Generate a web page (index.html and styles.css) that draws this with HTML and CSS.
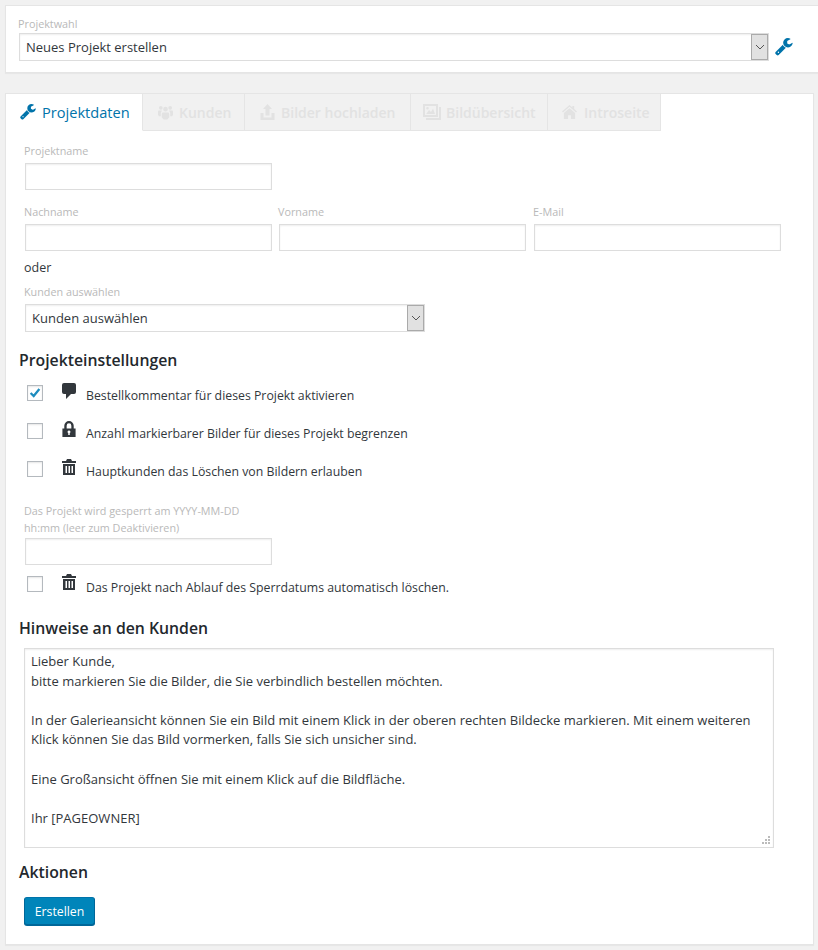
FILE: index.html
```
<!DOCTYPE html>
<html lang="de">
<head>
<meta charset="utf-8">
<title>Projektwahl</title>
<link rel="stylesheet" href="styles.css">
</head>
<body>
<svg class="defs" width="0" height="0">
  <symbol id="i-wrench" viewBox="0 0 1792 1792"><path d="M384 1344q0-26-19-45t-45-19-45 19-19 45 19 45 45 19 45-19 19-45zm644-420l-682 682q-37 37-90 37-52 0-91-37l-106-108q-38-36-38-90 0-53 38-91l681-681q39 98 114.5 173.5t173.5 114.5zm634-435q0 39-23 106-47 134-164.5 217.5t-258.5 83.5q-185 0-316.5-131.5t-131.500-316.500 131.500-316.500 316.500-131.500q58 0 121.500 16.500t107.500 46.500q16 11 16 28t-16 28l-293 169v224l193 107q5-3 79-48.500t135.500-81 70.500-35.500q15 0 23.500 10t8.500 25z"/></symbol>
  <symbol id="i-trash" viewBox="0 0 14 16"><path d="M5 0h4l1 2h4v2H0V2h4zM1 5h12v11H1zm2.500 2v7h1.500V7zm3 0v7h1.500V7zm3 0v7H11V7z" fill-rule="evenodd"/></symbol>
  <symbol id="i-lock" viewBox="0 0 14 17"><path d="M7 0a5 5 0 0 1 5 5v3h2v9H0V8h2V5a5 5 0 0 1 5-5zm0 2.500A2.500 2.500 0 0 0 4.500 5v3h5V5A2.500 2.500 0 0 0 7 2.500zM7 10a1.500 1.500 0 0 0-.8 2.800V15h1.600v-2.200A1.500 1.500 0 0 0 7 10z" fill-rule="evenodd"/></symbol>
  <symbol id="i-comment" viewBox="0 0 14 16"><path d="M2 0h10a2 2 0 0 1 2 2v7a2 2 0 0 1-2 2H9l-5 5v-5H2a2 2 0 0 1-2-2V2a2 2 0 0 1 2-2z"/></symbol>
  <symbol id="i-users" viewBox="0 0 16 16"><path d="M8 2.500a2.500 2.500 0 1 1 0 5 2.500 2.500 0 0 1 0-5zM3 1.500a2 2 0 1 1 0 4 2 2 0 0 1 0-4zm10 0a2 2 0 1 1 0 4 2 2 0 0 1 0-4zM5.500 8.500h5a1.500 1.500 0 0 1 1.500 1.500v3.500L10 16H6l-2-2.500V10a1.500 1.500 0 0 1 1.500-1.500zM1 6.500h3.200L3 9v3.500H1l-1-1.500V7.500a1 1 0 0 1 1-1zm10.800 0H15a1 1 0 0 1 1 1V11l-1 1.500h-2V9z"/></symbol>
  <symbol id="i-upload" viewBox="0 0 14 16"><path d="M7 0l4.500 5H9v6.500H5V5H2.500zM0 9h3v4.500h8V9h3v7H0z"/></symbol>
  <symbol id="i-images" viewBox="0 0 18 16"><path d="M0 0h15v13H0zm2 2v9h11V2zm1.200 8L6 6l2 2 2-3.500L12 10zM4.500 3a1.300 1.300 0 1 1 0 2.600 1.300 1.300 0 0 1 0-2.600zM16 3h2v13H3v-2h13z" fill-rule="evenodd"/></symbol>
  <symbol id="i-home" viewBox="0 0 16 15"><path d="M8 0l3 2.600V1h2v3.400L16 7l-1 1-7-6-7 6-1-1zM8 3.500l6 5V15H9.500v-4h-3v4H2V8.500z"/></symbol>
</svg>

<section class="panel panel-top">
  <label class="field-label">Projektwahl</label>
  <div class="project-row">
    <div class="select select-wide">
      <span class="select-value">Neues Projekt erstellen</span>
      <span class="select-arrow"><svg viewBox="0 0 10 6" width="10" height="6"><path d="M1 1l4 4 4-4" fill="none" stroke="#555" stroke-width="1"/></svg></span>
    </div>
    <svg class="icon-wrench-blue"><use href="#i-wrench"/></svg>
  </div>
</section>

<section class="panel panel-main">
  <nav class="tabs">
    <a class="tab tab-active tab-1"><svg class="tab-icon"><use href="#i-wrench"/></svg>Projektdaten</a>
    <a class="tab tab-2"><svg class="tab-icon"><use href="#i-users"/></svg>Kunden</a>
    <a class="tab tab-3"><svg class="tab-icon"><use href="#i-upload"/></svg>Bilder hochladen</a>
    <a class="tab tab-4"><svg class="tab-icon"><use href="#i-images"/></svg>Bildübersicht</a>
    <a class="tab tab-5"><svg class="tab-icon"><use href="#i-home"/></svg>Introseite</a>
  </nav>

  <div class="body">
    <div class="field field-name">
      <label class="field-label">Projektname</label>
      <div class="input"></div>
    </div>

    <div class="name-row">
      <div class="field"><label class="field-label">Nachname</label><div class="input"></div></div>
      <div class="field"><label class="field-label">Vorname</label><div class="input"></div></div>
      <div class="field"><label class="field-label">E-Mail</label><div class="input"></div></div>
    </div>

    <p class="oder">oder</p>

    <div class="field">
      <label class="field-label">Kunden auswählen</label>
      <div class="select select-customer">
        <span class="select-value">Kunden auswählen</span>
        <span class="select-arrow"><svg viewBox="0 0 10 6" width="10" height="6"><path d="M1 1l4 4 4-4" fill="none" stroke="#555" stroke-width="1"/></svg></span>
      </div>
    </div>

    <h2 class="heading heading-settings">Projekteinstellungen</h2>

    <div class="options">
      <div class="option">
        <span class="check"><svg viewBox="0 0 16 16" width="14" height="14"><path d="M3 8l3.500 3.500L13 3.500" fill="none" stroke="#1e8cbe" stroke-width="2.600"/></svg></span>
        <svg class="opt-icon"><use href="#i-comment"/></svg>
        <span class="opt-text">Bestellkommentar für dieses Projekt aktivieren</span>
      </div>
      <div class="option">
        <span class="check"></span>
        <svg class="opt-icon"><use href="#i-lock"/></svg>
        <span class="opt-text">Anzahl markierbarer Bilder für dieses Projekt begrenzen</span>
      </div>
      <div class="option">
        <span class="check"></span>
        <svg class="opt-icon"><use href="#i-trash"/></svg>
        <span class="opt-text">Hauptkunden das Löschen von Bildern erlauben</span>
      </div>
    </div>

    <div class="field field-lock">
      <label class="field-label field-label-wrap">Das Projekt wird gesperrt am YYYY-MM-DD hh:mm (leer zum Deaktivieren)</label>
      <div class="input"></div>
    </div>

    <div class="option option-auto">
      <span class="check"></span>
      <svg class="opt-icon"><use href="#i-trash"/></svg>
      <span class="opt-text">Das Projekt nach Ablauf des Sperrdatums automatisch löschen.</span>
    </div>

    <h2 class="heading heading-notes">Hinweise an den Kunden</h2>

    <div class="textarea">
      <p class="ta-line">Lieber Kunde,</p>
      <p class="ta-line">bitte markieren Sie die Bilder, die Sie verbindlich bestellen möchten.</p>
      <p class="ta-line">&nbsp;</p>
      <p class="ta-line">In der Galerieansicht können Sie ein Bild mit einem Klick in der oberen rechten Bildecke markieren. Mit einem weiteren Klick können Sie das Bild vormerken, falls Sie sich unsicher sind.</p>
      <p class="ta-line">&nbsp;</p>
      <p class="ta-line">Eine Großansicht öffnen Sie mit einem Klick auf die Bildfläche.</p>
      <p class="ta-line">&nbsp;</p>
      <p class="ta-line">Ihr [PAGEOWNER]</p>
      <svg class="grip" viewBox="0 0 9 9" width="9" height="9"><path d="M6 0h2v2H6zM3 3h2v2H3zM6 3h2v2H6zM0 6h2v2H0zM3 6h2v2H3zM6 6h2v2H6z" fill="#bbb"/></svg>
    </div>

    <h2 class="heading heading-actions">Aktionen</h2>
    <button class="btn">Erstellen</button>
  </div>
</section>
</body>
</html>
```
FILE: styles.css
```
* { box-sizing: border-box; }
html, body { margin: 0; padding: 0; }
body {
  background: #f1f1f1;
  color: #32373c;
  font-family: "Open Sans", "Noto Sans", sans-serif;
  font-size: 12.300px;
  padding: 5px 0 0 5px;
  height: 950px;
  overflow: hidden;
}
.defs { position: absolute; }
.panel {
  background: #fff;
  border: 1px solid #e5e5e5;
  box-shadow: 0 1px 1px rgba(0,0,0,.04);
}
.panel-top {
  height: 68px;
  padding: 11px 0 0 13px;
  border-right: 0;
}
.panel-top .field-label { margin-left: -1px; }
.panel-main {
  margin-top: 20px;
  width: 809px;
  height: 852px;
}
.field-label {
  display: block;
  font-size: 10.800px;
  line-height: 14px;
  color: #b9b9b9;
}
.project-row {
  display: flex;
  align-items: center;
  margin-top: 2px;
}
.select {
  display: flex;
  justify-content: space-between;
  align-items: stretch;
  height: 28px;
  border: 1px solid #ddd;
  background: #fff;
  box-shadow: inset 0 1px 2px rgba(0,0,0,.07);
}
.select-wide { width: 750px; }
.select-customer { width: 400px; margin-top: 5px; }
.select-value { padding-left: 6px; line-height: 26px; font-size: 13px; }
.select-arrow {
  width: 17px;
  display: flex;
  align-items: center;
  justify-content: center;
  background: #e1e1e1;
  border: 1px solid #aaa;
}
.icon-wrench-blue { width: 19px; height: 19px; margin-left: 6px; fill: #0073aa; }

.tabs { display: flex; height: 36px; }
.tab {
  display: flex;
  align-items: center;
  gap: 6px;
  height: 37px;
  padding-left: 15px;
  background: #f1f1f1;
  border: 1px solid #e5e5e5;
  border-width: 0 1px 1px 0;
  color: #e2e2e2;
  font-size: 14px;
  font-weight: 600;
  white-space: nowrap;
  overflow: hidden;
}
.tab-icon { flex: none; width: 15px; height: 16px; fill: #e2e2e2; }
.tab-active {
  padding-left: 14px;
  gap: 5px;
  background: #fff;
  color: #0073aa;
  font-size: 14.600px;
  font-weight: 400;
  border-bottom-color: #fff;
}
.tab-active .tab-icon { width: 17px; height: 17px; fill: #0073aa; }
.tab-1 { width: 137px; }
.tab-2 { width: 102px; }
.tab-3 { width: 166px; }
.tab-4 { width: 137px; padding-left: 12px; gap: 5px; }
.tab-4 .tab-icon { width: 18px; }
.tab-5 { width: 113px; padding-left: 14px; gap: 7px; }

.body { padding: 14px 0 0 13px; }
.field .input {
  width: 247px;
  margin: 5px 0 0 6px;
  height: 27px;
  border: 1px solid #ddd;
  box-shadow: inset 0 1px 2px rgba(0,0,0,.07);
}
.field .field-label { margin-left: 5px; }
.field-name { height: 47px; }
.name-row {
  display: grid;
  grid-template-columns: 254px 255px 253px;
  margin-top: 14px;
}
.oder { margin: 8px 0 0 5px; line-height: 18px; font-size: 12.500px; }
.select-customer { margin-left: 6px; }
.oder + .field { margin-top: 8px; }
.heading {
  margin: 0;
  font-size: 15.800px;
  line-height: 22px;
  font-weight: 600;
  color: #23282d;
}
.heading-settings { margin-top: 17px; }
.options { margin-top: 11px; display: flex; flex-direction: column; gap: 14px; }
.option { display: flex; align-items: flex-start; height: 24px; padding-left: 8px; }
.check {
  flex: none;
  width: 16px;
  height: 16px;
  margin-top: 3px;
  border: 1px solid #b4b9be;
  background: #fff;
  box-shadow: inset 0 1px 2px rgba(0,0,0,.1);
  display: flex;
  align-items: center;
  justify-content: center;
}
.opt-icon { flex: none; width: 14px; height: 16px; margin: 1px 0 0 19px; fill: #32373c; }
.opt-text { margin-left: 10px; line-height: 18px; margin-top: 6px; white-space: nowrap; }
.options .opt-text { margin-top: 5px; }
.field-lock { margin-top: 20px; }
.field-label-wrap { width: 230px; line-height: 17px; }
.field-lock .input { margin-top: 2px; }
.option-auto { margin-top: 8px; }
.heading-notes { margin-top: 20px; }
.textarea {
  position: relative;
  margin: 9px 0 0 5px;
  width: 750px;
  height: 200px;
  border: 1px solid #ddd;
  padding: 3px 6px;
  line-height: 19.600px;
  font-size: 13px;
  box-shadow: inset 0 1px 2px rgba(0,0,0,.07);
}
.ta-line { margin: 0; }
.grip { position: absolute; right: 2px; bottom: 2px; }
.heading-actions { margin-top: 13px; }
.btn {
  display: block;
  margin: 14px 0 0 5px;
  width: 71px;
  height: 28px;
  padding: 0;
  background: #0085ba;
  border: 1px solid #006799;
  border-color: #0073aa #006799 #006799;
  border-radius: 3px;
  box-shadow: 0 1px 0 #006799;
  color: #fff;
  font-family: inherit;
  font-size: 12.300px;
}
```
